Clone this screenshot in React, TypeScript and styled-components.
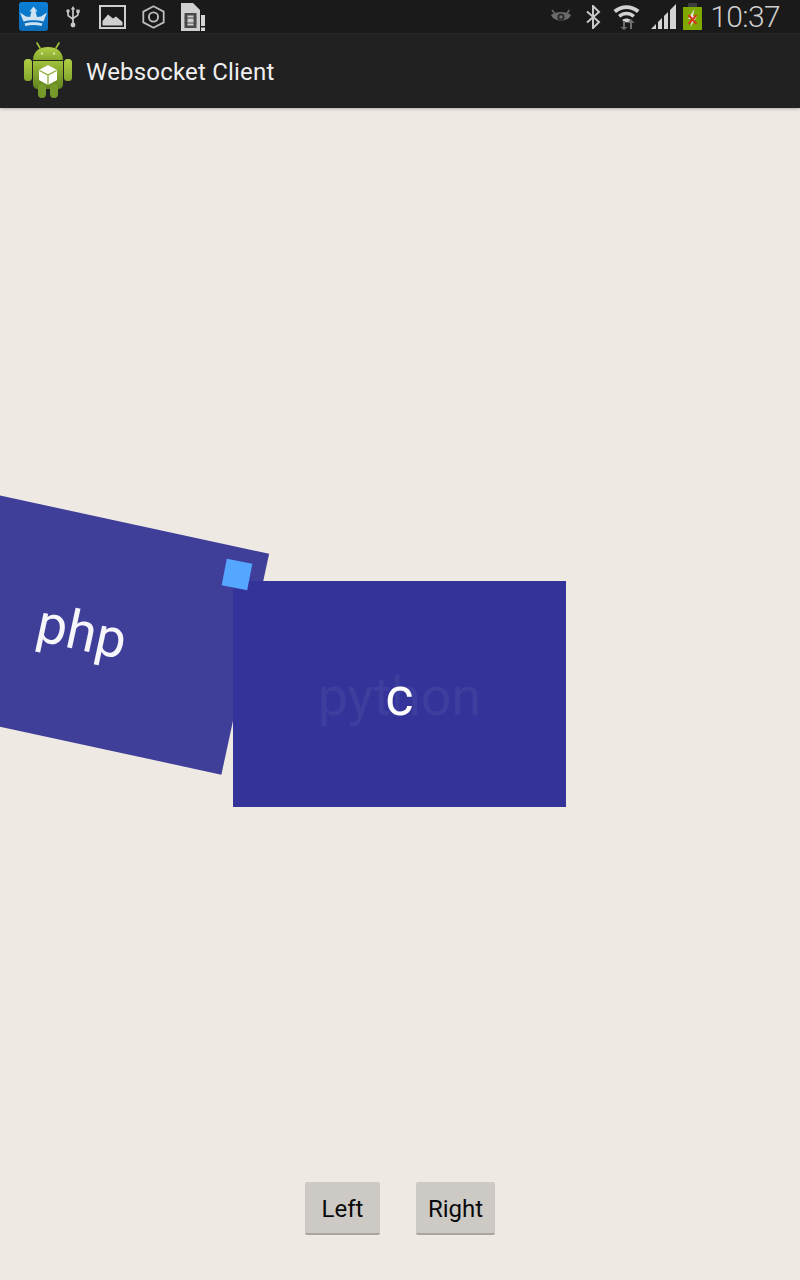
import React from "react";
import styled, { createGlobalStyle } from "styled-components";

const GlobalStyle = createGlobalStyle`
  html, body {
    margin: 0;
    padding: 0;
    background: #eee9e3;
  }

  #root {
    height: 1280px;
    overflow: hidden;
  }
`;

const Screen = styled.div`
  display: flex;
  flex-direction: column;
  width: 800px;
  height: 1280px;
  font-family: Roboto, "Liberation Sans", sans-serif;
`;

const StatusBar = styled.header`
  display: flex;
  align-items: center;
  justify-content: space-between;
  box-sizing: border-box;
  height: 34px;
  padding: 0 20px 0 19px;
  background: #1a1a1a;
  border-bottom: 1px solid #2a2a2a;
`;

const IconGroup = styled.div`
  display: flex;
  align-items: center;
`;

const StatusIcon = styled.svg<{ $left?: number }>`
  display: block;
  flex: none;
  margin-left: ${(p) => p.$left ?? 0}px;
`;

const Clock = styled.span`
  margin-left: 8px;
  color: #cfcfcf;
  font-size: 30px;
  font-weight: 300;
  letter-spacing: -0.6px;
  line-height: 33px;
`;

const ActionBar = styled.div`
  position: relative;
  display: flex;
  align-items: center;
  flex: none;
  gap: 14px;
  height: 74px;
  padding-left: 24px;
  background: #212121;
  box-shadow: 0 1px 3px rgba(0, 0, 0, 0.25);
`;

const LogoSvg = styled.svg`
  display: block;
  flex: none;
  margin-top: -2px;
`;

const AppTitle = styled.h1`
  margin: 1px 0 0;
  color: #f0f0f0;
  font-size: 24px;
  font-weight: 400;
  letter-spacing: 0.2px;
`;

const Main = styled.main`
  display: grid;
  flex: 1;
  background: #eee9e3;
`;

const Deck = styled.div`
  position: relative;
  grid-area: 1 / 1;
  place-self: center;
  width: 333px;
  height: 226px;
  margin-left: -1px;
`;

const Slide = styled.div`
  display: flex;
  align-items: center;
  justify-content: center;
  box-sizing: border-box;
  width: 333px;
  height: 226px;
  padding-top: 4px;
  font-size: 54px;
`;

const BackSlide = styled(Slide)`
  position: absolute;
  left: -317px;
  top: -65px;
  background: #3f3f9a;
  color: #f6f6fb;
  transform: rotate(12.2deg);
`;

const FrontSlide = styled(Slide)`
  position: relative;
  background: #333399;
  color: #3e3e9e;
`;

const CenterLetter = styled.span`
  position: absolute;
  left: 0;
  right: 0;
  text-align: center;
  color: #ffffff;
`;

const Marker = styled.div`
  position: absolute;
  left: -9px;
  top: -20px;
  width: 26px;
  height: 27px;
  background: #55a6ff;
  transform: rotate(11deg);
`;

const ButtonRow = styled.div`
  display: flex;
  grid-area: 1 / 1;
  align-self: end;
  justify-self: center;
  gap: 36px;
  margin-bottom: 45px;
`;

const ActionButton = styled.button<{ $width: number }>`
  box-sizing: border-box;
  width: ${(p) => p.$width}px;
  height: 53px;
  padding: 2px 0 0;
  border: 0;
  border-bottom: 2px solid #a8a5a1;
  border-radius: 2px;
  background: #cdcac5;
  color: #0a0a0a;
  font-family: inherit;
  font-size: 24px;
`;

const KingIcon = () => (
  <StatusIcon width="29" height="29" viewBox="0 0 29 29">
    <defs>
      <linearGradient id="kingBg" x1="0" y1="0" x2="0" y2="1">
        <stop offset="0" stopColor="#0a80d6" />
        <stop offset="1" stopColor="#0b6cb8" />
      </linearGradient>
    </defs>
    <rect width="29" height="29" rx="3" fill="url(#kingBg)" />
    <path
      d="M1 10.5 L7 14.5 L11 15 L12.5 9.5 L10.5 9.5 L14.5 4.5 L18.5 9.5 L16.5 9.5 L18 15 L22 14.5 L28 10.5 L24.5 19.5 C19 17.8 10 17.8 4.5 19.5 Z"
      fill="#cfe3f2"
    />
    <path d="M5.5 21.5 C11 19.8 18 19.8 23.5 21.5 L22.5 24 C17.5 22.6 11.5 22.6 6.5 24 Z" fill="#cfe3f2" />
  </StatusIcon>
);

const UsbIcon = () => (
  <StatusIcon $left={18} width="14" height="22" viewBox="0 0 14 22">
    <path d="M7 0 L9.2 3.5 L4.8 3.5 Z" fill="#c8c8c8" />
    <path d="M7 3 V18 M2 6 V9 C2 11 7 11.5 7 14 M12 6 V8.5 C12 10.5 7 11 7 13" stroke="#c8c8c8" strokeWidth="1.7" fill="none" />
    <circle cx="2" cy="5" r="1.7" fill="#c8c8c8" />
    <rect x="10.3" y="3.6" width="3.4" height="3.2" fill="#c8c8c8" />
    <circle cx="7" cy="19" r="2.4" fill="#c8c8c8" />
  </StatusIcon>
);

const ImageIcon = () => (
  <StatusIcon $left={19} width="27" height="24" viewBox="0 0 27 24">
    <rect x="1" y="1" width="25" height="22" fill="none" stroke="#cfcfcf" strokeWidth="2" />
    <path d="M3.5 20.5 V16 L9 9.5 L14 13.5 L17 11.5 L23.5 17 V20.5 Z" fill="#cfcfcf" />
  </StatusIcon>
);

const HexIcon = () => (
  <StatusIcon $left={16} width="23" height="24" viewBox="0 0 23 24">
    <path d="M11.5 1.3 L21.7 6.6 V17.4 L11.5 22.7 L1.3 17.4 V6.6 Z" fill="none" stroke="#bdbdbd" strokeWidth="1.8" strokeLinejoin="round" />
    <circle cx="11.5" cy="12" r="4.6" fill="none" stroke="#bdbdbd" strokeWidth="1.9" />
  </StatusIcon>
);

const SimIcon = () => (
  <StatusIcon $left={16} width="24" height="29" viewBox="0 0 24 29">
    <path d="M0 1 H12 L19 8 V29 H0 Z" fill="#cfcfcf" />
    <rect x="3.5" y="11" width="12" height="15" fill="#4a4a4a" />
    <rect x="6.5" y="13.5" width="6" height="10" fill="#cfcfcf" />
    <path d="M3.5 16 H15.5 M3.5 21 H15.5" stroke="#4a4a4a" strokeWidth="1" />
    <rect x="20" y="13" width="4" height="11" fill="#d4d4d4" />
    <rect x="20" y="25.5" width="4" height="3.5" fill="#d4d4d4" />
  </StatusIcon>
);

const EyeIcon = () => (
  <StatusIcon width="22" height="16" viewBox="0 0 22 16">
    <path d="M1 6 C5 2 17 2 21 6 C18 13.5 4 13.5 1 6 Z" fill="#6b6b6b" />
    <circle cx="11" cy="8" r="3.6" fill="#2a2a2a" />
    <circle cx="11" cy="8" r="1.7" fill="#6b6b6b" />
    <path d="M2 1 L4.5 4 M19.5 1 L17 4" stroke="#6b6b6b" strokeWidth="1.6" />
  </StatusIcon>
);

const BluetoothIcon = () => (
  <StatusIcon $left={14} width="15" height="24" viewBox="0 0 15 24">
    <path d="M1 6.5 L13 17 L7 23 V1 L13 7 L1 17.5" fill="none" stroke="#c8c8c8" strokeWidth="2" />
  </StatusIcon>
);

const WifiIcon = () => (
  <StatusIcon $left={12} width="27" height="27" viewBox="0 0 27 27">
    <path d="M0.5 7 C8 0.5 19 0.5 26.5 7 L24 10 C17.5 4.5 9.5 4.5 3 10 Z" fill="#d2d2d2" />
    <path d="M5 12 C10 7.5 17 7.5 22 12 L19.8 14.6 C15.8 11.3 11.2 11.3 7.2 14.6 Z" fill="#d2d2d2" />
    <path d="M9.2 17 C11.8 15 15.2 15 17.8 17 L15.5 19.2 L11.5 19.2 Z" fill="#d2d2d2" />
    <path d="M10 18 V24 H7.5 L11 27 L14.5 24 H12 V18 Z" fill="#6e6e6e" />
    <path d="M17 26 V20 H14.5 L18 16 L21.5 20 H19 V26 Z" fill="#6e6e6e" />
  </StatusIcon>
);

const SignalIcon = () => (
  <StatusIcon $left={11} width="25" height="25" viewBox="0 0 25 25">
    <path d="M0 25 L5 20 V25 Z M7 25 V18 L11 14 V25 Z M13 25 V12 L17 8 V25 Z M19 25 V6 L25 0 V25 Z" fill="#d4d4d4" />
  </StatusIcon>
);

const BatteryIcon = () => (
  <StatusIcon $left={7} width="19" height="27" viewBox="0 0 19 27">
    <rect x="5" y="0" width="9" height="4" fill="#3d3d3d" />
    <rect x="0" y="4" width="19" height="23" fill="#7fa800" />
    <path d="M11.5 6 L5 16 H9 L7.5 24 L14 13 H10 Z" fill="#e4e4e4" />
    <path d="M5.5 12 L13.5 21 M13.5 12 L5.5 21" stroke="#d8371c" strokeWidth="2" />
  </StatusIcon>
);

const AndroidLogo = () => (
  <LogoSvg width="48" height="56" viewBox="0 0 48 56">
    <defs>
      <linearGradient id="droidHead" x1="0" y1="0" x2="0" y2="1">
        <stop offset="0" stopColor="#b0ce45" />
        <stop offset="1" stopColor="#85a82c" />
      </linearGradient>
      <linearGradient id="droidBody" x1="0" y1="0" x2="0" y2="1">
        <stop offset="0" stopColor="#9fc23a" />
        <stop offset="1" stopColor="#5f8220" />
      </linearGradient>
    </defs>
    <path d="M16 6 L13 1 M32 6 L35 1" stroke="#a5c53c" strokeWidth="1.6" strokeLinecap="round" />
    <path d="M9 18 C9 9.5 15.5 5 24 5 C32.5 5 39 9.5 39 18 Z" fill="url(#droidHead)" />
    <circle cx="18" cy="11.5" r="1.1" fill="#e6f0c0" />
    <circle cx="30" cy="11.5" r="1.1" fill="#e6f0c0" />
    <path d="M9 19 H39 V42 C39 45 37 47 34 47 H14 C11 47 9 45 9 42 Z" fill="url(#droidBody)" />
    <rect x="0" y="17" width="8" height="22" rx="3.5" fill="url(#droidHead)" />
    <rect x="40" y="17" width="8" height="22" rx="3.5" fill="url(#droidHead)" />
    <rect x="14" y="42" width="8" height="14" rx="4" fill="#76992a" />
    <rect x="26" y="42" width="8" height="14" rx="4" fill="#76992a" />
    <path d="M24 23 L33 28 V38 L24 43 L15 38 V28 Z" fill="#ffffff" />
    <path d="M15.5 28.5 L24 33 L32.5 28.5 M24 33 V43" stroke="#8cad32" strokeWidth="1.3" fill="none" />
  </LogoSvg>
);

const App = () => {
  return (
    <Screen>
      <GlobalStyle />
      <StatusBar>
        <IconGroup>
          <KingIcon />
          <UsbIcon />
          <ImageIcon />
          <HexIcon />
          <SimIcon />
        </IconGroup>
        <IconGroup>
          <EyeIcon />
          <BluetoothIcon />
          <WifiIcon />
          <SignalIcon />
          <BatteryIcon />
          <Clock>10:37</Clock>
        </IconGroup>
      </StatusBar>
      <ActionBar>
        <AndroidLogo />
        <AppTitle>Websocket Client</AppTitle>
      </ActionBar>
      <Main>
        <Deck>
          <BackSlide>php</BackSlide>
          <FrontSlide>
            python
            <CenterLetter>c</CenterLetter>
          </FrontSlide>
          <Marker />
        </Deck>
        <ButtonRow>
          <ActionButton $width={75}>Left</ActionButton>
          <ActionButton $width={79}>Right</ActionButton>
        </ButtonRow>
      </Main>
    </Screen>
  );
};

export default App;
